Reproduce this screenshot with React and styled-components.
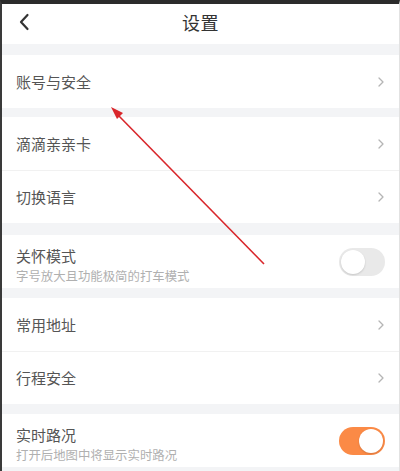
import React from "react";
import styled, { createGlobalStyle } from "styled-components";

const GlobalStyle = createGlobalStyle`
  html, body {
    margin: 0;
    padding: 0;
    background: #f3f4f6;
  }
  * {
    box-sizing: border-box;
  }
`;

const Screen = styled.div`
  position: relative;
  width: 400px;
  height: 471px;
  overflow: hidden;
  background: #f3f4f6;
  border-top: 4px solid #2b2b2b;
  border-left: 2px solid #3a3a3a;
  border-right: 1px solid #e2e2e2;
  font-family: "Noto Sans CJK SC", "Noto Sans", sans-serif;
`;

const Header = styled.header`
  height: 40px;
  padding-bottom: 5px;
  background: #fff;
  display: flex;
  align-items: center;
  justify-content: center;
  position: relative;
`;

const BackButton = styled.button`
  position: absolute;
  left: 11px;
  top: 7px;
  width: 22px;
  height: 22px;
  padding: 0;
  border: none;
  background: none;
  display: flex;
  align-items: center;
  justify-content: center;
`;

const Title = styled.h1`
  margin: 0;
  font-size: 18px;
  font-weight: 400;
  color: #333;
  letter-spacing: 0.5px;
`;

const Group = styled.section`
  background: #fff;
  margin-top: ${(p) => p.$gap || 10}px;
  display: flex;
  flex-direction: column;
`;

const Row = styled.div`
  height: 53px;
  display: flex;
  align-items: center;
  justify-content: space-between;
  padding: 0 14px 0 14px;
  & + & {
    border-top: 1px solid #f1f1f1;
  }
`;

const Texts = styled.div`
  display: flex;
  flex-direction: column;
  gap: 3px;
  margin-top: 8px;
`;

const Label = styled.span`
  font-size: 15px;
  color: #555;
  line-height: 18px;
`;

const Sub = styled.span`
  font-size: 12.4px;
  color: #b0b0b0;
  line-height: 16px;
`;

const Toggle = styled.div`
  width: 46px;
  height: 28px;
  border-radius: 14px;
  background: ${(p) => (p.$on ? "#fb8a46" : "#e9e9e9")};
  position: relative;
  &::after {
    content: "";
    position: absolute;
    top: 2px;
    left: ${(p) => (p.$on ? "20px" : "2px")};
    width: 24px;
    height: 24px;
    border-radius: 50%;
    background: #fff;
    box-shadow: 0 1px 2px rgba(0, 0, 0, 0.15);
  }
`;

const Arrow = styled.svg`
  position: absolute;
  left: 0;
  top: 0;
  pointer-events: none;
`;

const Chevron = () => (
  <svg width="8" height="12" viewBox="0 0 8 12">
    <path d="M2 2 L6 6 L2 10" fill="none" stroke="#b5b5b5" strokeWidth="1.3" strokeLinecap="round" strokeLinejoin="round" />
  </svg>
);

const Item = ({ label, sub, toggle }) => (
  <Row>
    {sub ? (
      <Texts>
        <Label>{label}</Label>
        <Sub>{sub}</Sub>
      </Texts>
    ) : (
      <Label>{label}</Label>
    )}
    {toggle === undefined ? <Chevron /> : <Toggle $on={toggle} />}
  </Row>
);

export default function App() {
  return (
    <>
      <GlobalStyle />
      <Screen>
        <Header>
          <BackButton aria-label="back">
            <svg width="12" height="18" viewBox="0 0 12 18">
              <path d="M9.5 2 L3 9 L9.5 16" fill="none" stroke="#333" strokeWidth="2.2" strokeLinecap="round" strokeLinejoin="round" />
            </svg>
          </BackButton>
          <Title>设置</Title>
        </Header>
        <Group $gap={11}>
          <Item label="账号与安全" />
        </Group>
        <Group $gap={9}>
          <Item label="滴滴亲亲卡" />
          <Item label="切换语言" />
        </Group>
        <Group $gap={12}>
          <Item label="关怀模式" sub="字号放大且功能极简的打车模式" toggle={false} />
        </Group>
        <Group>
          <Item label="常用地址" />
          <Item label="行程安全" />
        </Group>
        <Group>
          <Item label="实时路况" sub="打开后地图中将显示实时路况" toggle={true} />
        </Group>
        <Arrow width="400" height="471" viewBox="0 0 400 471">
          <line x1="115" y1="110" x2="262" y2="260" stroke="#d9262b" strokeWidth="1.6" />
          <polygon points="109,103 121,109 115,115" fill="#d9262b" />
        </Arrow>
      </Screen>
    </>
  );
}
